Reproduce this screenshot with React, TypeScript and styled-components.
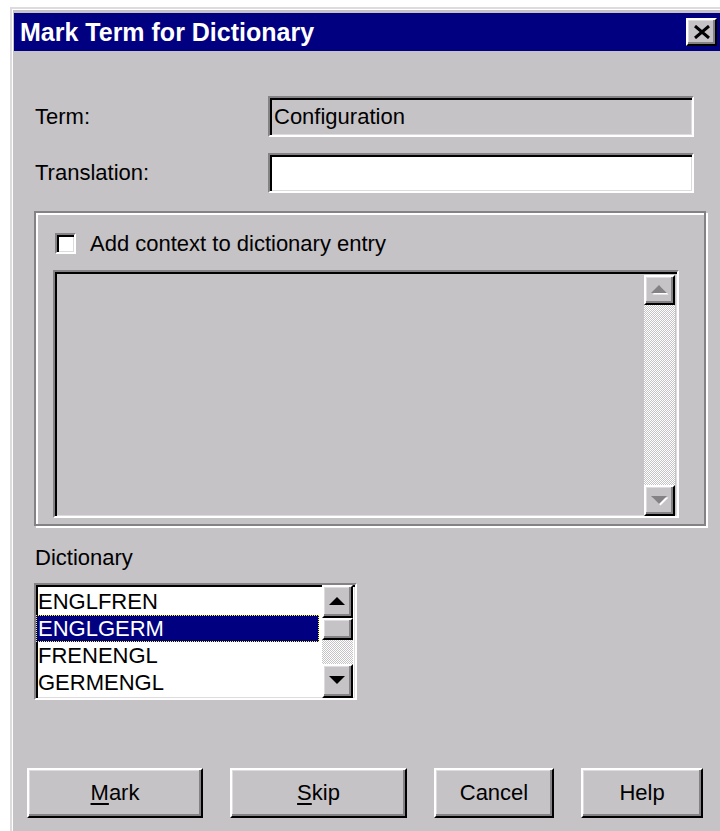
import React from 'react';
import styled, { createGlobalStyle, css } from 'styled-components';

const GlobalStyle = createGlobalStyle`
  html, body {
    margin: 0;
    padding: 0;
    background: #fff;
  }
  body {
    width: 720px;
    height: 831px;
    overflow: hidden;
    font-family: 'Liberation Sans', Arial, sans-serif;
    color: #000;
  }
`;

const FACE = '#c6c3c6';
const SHADOW = '#848284';
const LIGHT = '#dedbde';

// 3d edges, windows 9x style
const sunken = css`
  box-sizing: border-box;
  border-style: solid;
  border-width: 2px;
  border-color: ${SHADOW} #fff #fff ${SHADOW};
  box-shadow: inset 2px 2px #000, inset -1px -1px ${LIGHT};
`;

const raised = css`
  box-sizing: border-box;
  border-style: solid;
  border-width: 2px;
  border-color: #fff #000 #000 #fff;
  box-shadow: inset -2px -2px ${SHADOW}, inset 1px 1px ${LIGHT};
  background: ${FACE};
`;

const Window = styled.div`
  margin: 7px 0 0 10px;
  height: 824px;
  box-sizing: border-box;
  background: ${FACE};
  border-top: 2px solid ${LIGHT};
  border-left: 2px solid ${LIGHT};
  box-shadow: inset 1px 1px #fff;
  padding: 4px 0 0 2px;
  display: flex;
  flex-direction: column;
`;

const TitleBar = styled.div`
  height: 38px;
  flex-shrink: 0;
  background: #000080;
  display: flex;
  align-items: center;
  justify-content: space-between;
  padding: 0 3px 0 6px;
  color: #fff;
  font-weight: 700;
  font-size: 25px;
`;

const CloseButton = styled.div`
  ${raised};
  width: 31px;
  height: 28px;
  display: flex;
  align-items: center;
  justify-content: center;
`;

const Body = styled.div`
  padding: 45px 0 0 20px;
  display: flex;
  flex-direction: column;
`;

const FieldRow = styled.div<{ $top: number }>`
  display: grid;
  grid-template-columns: 234px 426px;
  align-items: center;
  margin-top: ${(p) => p.$top}px;
`;

const Label = styled.span`
  font-size: 22px;
  padding-left: 1px;
`;

const TextBox = styled.div<{ $bg: string; $h: number }>`
  ${sunken};
  height: ${(p) => p.$h}px;
  background: ${(p) => p.$bg};
  display: flex;
  align-items: center;
  padding-left: 4px;
  font-size: 22px;
`;

const Group = styled.div`
  box-sizing: border-box;
  width: 672px;
  height: 315px;
  margin-top: 18px;
  border: 2px solid ${SHADOW};
  box-shadow: inset 2px 2px #fff, 2px 2px #fff;
  padding: 20px 25px 6px 17px;
  display: flex;
  flex-direction: column;
`;

const CheckRow = styled.label`
  display: flex;
  align-items: center;
  gap: 14px;
  height: 21px;
  margin-left: 2px;
  font-size: 22px;
`;

const CheckBox = styled.span`
  ${sunken};
  width: 21px;
  height: 21px;
  background: #fff;
  flex-shrink: 0;
`;

const ContextBox = styled.div`
  ${sunken};
  width: 626px;
  height: 248px;
  margin-top: 16px;
  padding: 3px 2px 0 0;
  background: ${FACE};
  display: flex;
  justify-content: flex-end;
`;

const ScrollBar = styled.div`
  width: 31px;
  display: flex;
  flex-direction: column;
`;

const ScrollButton = styled.div<{ $h: number }>`
  ${raised};
  height: ${(p) => p.$h}px;
  flex-shrink: 0;
  display: flex;
  align-items: center;
  justify-content: center;
`;

const Track = styled.div`
  flex: 1;
  background: repeating-conic-gradient(#fff 0 25%, ${FACE} 0 50%) 0 0 / 2px 2px;
`;

const DictLabel = styled(Label)`
  display: block;
  margin-top: 20px;
  height: 24px;
  line-height: 24px;
`;

const ListBox = styled.div`
  ${sunken};
  width: 323px;
  height: 117px;
  margin-top: 13px;
  padding-right: 2px;
  background: #fff;
  display: flex;
`;

const Items = styled.div`
  flex: 1;
  padding-top: 3px;
  margin-right: 3px;
`;

const Item = styled.div<{ $selected?: boolean }>`
  height: 27px;
  line-height: 27px;
  padding-left: 2px;
  font-size: 22px;
  ${(p) =>
    p.$selected &&
    css`
      background: #000080;
      color: #fff;
      outline: 1px dotted #ffff00;
      outline-offset: -1px;
    `}
`;

const ButtonRow = styled.div`
  display: flex;
  gap: 27px;
  margin: 68px 0 0 -7px;
`;

const Button = styled.div<{ $w: number }>`
  ${raised};
  width: ${(p) => p.$w}px;
  height: 50px;
  display: flex;
  align-items: center;
  justify-content: center;
  font-size: 22px;

  u {
    text-underline-offset: 3px;
  }
`;

const Arrow = ({ dir, disabled }: { dir: 'up' | 'down'; disabled?: boolean }) => {
  const pts = dir === 'up' ? '0,8 8,0 16,8' : '0,0 8,8 16,0';
  return (
    <svg width="18" height="10" viewBox="0 0 18 10">
      {disabled && <polygon points={pts} fill="#fff" transform="translate(1.5 1.5)" />}
      <polygon points={pts} fill={disabled ? SHADOW : '#000'} />
    </svg>
  );
};

const dictionaries = ['ENGLFREN', 'ENGLGERM', 'FRENENGL', 'GERMENGL'];

const App = () => {
  return (
    <>
      <GlobalStyle />
      <Window>
        <TitleBar>
          <span>Mark Term for Dictionary</span>
          <CloseButton>
            <svg width="18" height="14" viewBox="0 0 18 14">
              <path d="M2 1 L16 13 M16 1 L2 13" stroke="#000" strokeWidth="3" />
            </svg>
          </CloseButton>
        </TitleBar>
        <Body>
          <FieldRow $top={0}>
            <Label>Term:</Label>
            <TextBox $bg={FACE} $h={41}>Configuration</TextBox>
          </FieldRow>
          <FieldRow $top={16}>
            <Label>Translation:</Label>
            <TextBox $bg="#fff" $h={40} />
          </FieldRow>

          <Group>
            <CheckRow>
              <CheckBox />
              Add context to dictionary entry
            </CheckRow>
            <ContextBox>
              <ScrollBar>
                <ScrollButton $h={30}>
                  <Arrow dir="up" disabled />
                </ScrollButton>
                <Track />
                <ScrollButton $h={31}>
                  <Arrow dir="down" disabled />
                </ScrollButton>
              </ScrollBar>
            </ContextBox>
          </Group>

          <DictLabel>Dictionary</DictLabel>
          <ListBox>
            <Items>
              {dictionaries.map((d) => (
                <Item key={d} $selected={d === 'ENGLGERM'}>
                  {d}
                </Item>
              ))}
            </Items>
            <ScrollBar>
              <ScrollButton $h={33}>
                <Arrow dir="up" />
              </ScrollButton>
              <ScrollButton $h={22} />
              <Track />
              <ScrollButton $h={34}>
                <Arrow dir="down" />
              </ScrollButton>
            </ScrollBar>
          </ListBox>

          <ButtonRow>
            <Button $w={176}>
              <span>
                <u>M</u>ark
              </span>
            </Button>
            <Button $w={177}>
              <span>
                <u>S</u>kip
              </span>
            </Button>
            <Button $w={120}>Cancel</Button>
            <Button $w={122}>Help</Button>
          </ButtonRow>
        </Body>
      </Window>
    </>
  );
};

export default App;
